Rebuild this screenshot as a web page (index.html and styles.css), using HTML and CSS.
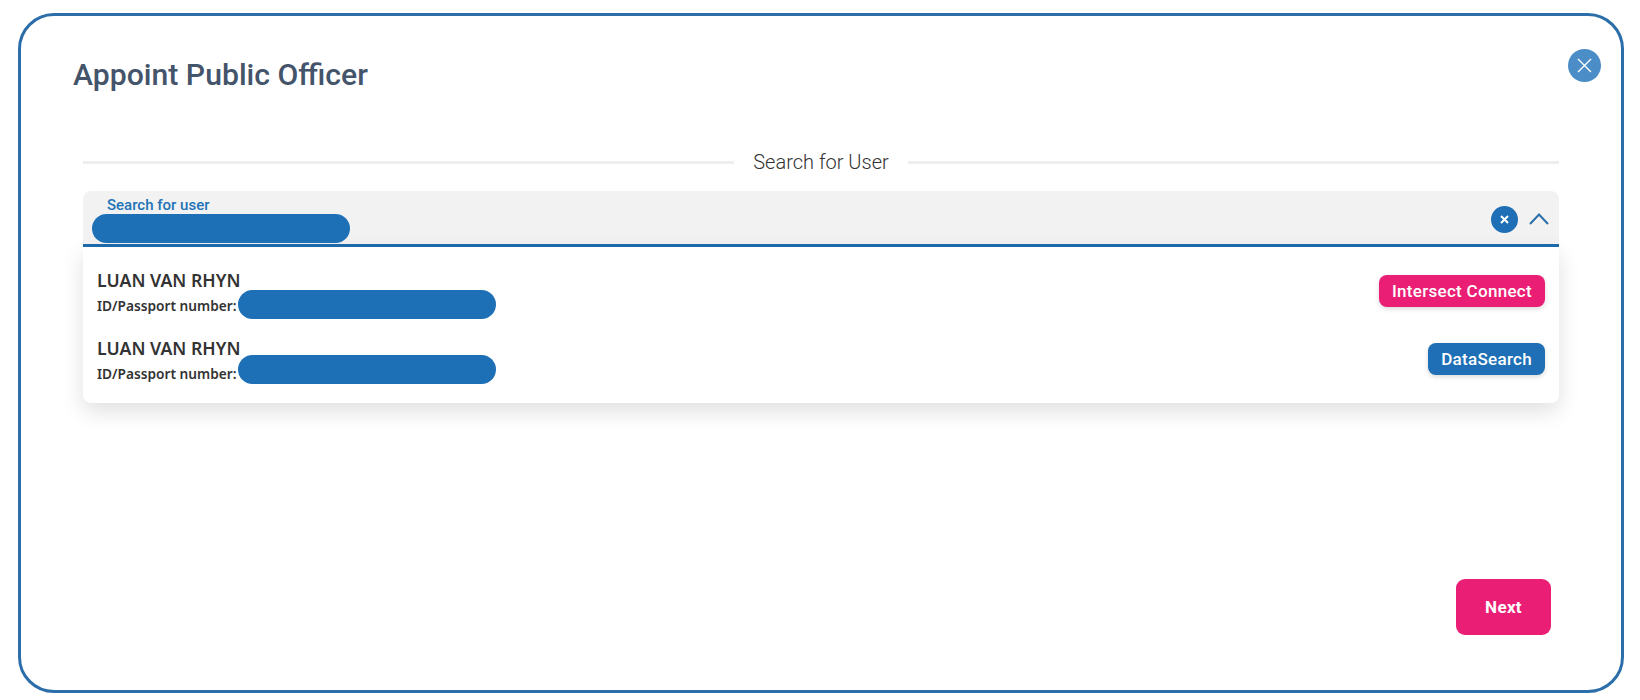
FILE: index.html
```html
<!DOCTYPE html>
<html lang="en">
  <head>
    <meta charset="UTF-8" />
    <meta name="viewport" content="width=device-width, initial-scale=1.0" />
    <title>Appoint Public Officer</title>
    <link rel="stylesheet" href="styles.css">
  </head>

  <body>
    <div class="modal">
      <button type="button" class="btn-close" aria-label="Close">
        <svg width="15" height="15" viewBox="0 0 15 15"><path d="M1 1l13 13M14 1L1 14" /></svg>
      </button>

      <h1 class="modal-title">Appoint Public Officer</h1>

      <div class="section">
        <div class="section-head"><span>Search for User</span></div>

        <div class="search-box">
          <div class="search-value">
            <label class="search-label">Search for user</label>
            <span class="mask mask-input"></span>
          </div>
          <button type="button" class="btn-clear" aria-label="Clear">
            <svg width="9" height="9" viewBox="0 0 9 9"><path d="M1 1l7 7M8 1L1 8" /></svg>
          </button>
          <button type="button" class="btn-arrow" aria-label="Collapse">
            <svg width="20" height="12" viewBox="0 0 20 12"><path d="M1 11l9-9.500 9 9.500" /></svg>
          </button>
        </div>

        <ul class="list">
          <li class="row">
            <div>
              <div class="name">LUAN VAN RHYN</div>
              <div class="id-line">ID/Passport number:<span class="mask mask-id"></span></div>
            </div>
            <button type="button" class="tag tag-pink">Intersect Connect</button>
          </li>
          <li class="row">
            <div>
              <div class="name">LUAN VAN RHYN</div>
              <div class="id-line">ID/Passport number:<span class="mask mask-id mask-up"></span></div>
            </div>
            <button type="button" class="tag tag-blue">DataSearch</button>
          </li>
        </ul>
      </div>

      <div class="modal-foot">
        <button type="button" class="btn-next">Next</button>
      </div>
    </div>
  </body>
</html>
```

FILE: styles.css
```css
html,
body {
  margin: 0;
  padding: 0;
  background: #fff;
}

body {
  font-family: Roboto, "Liberation Sans", sans-serif;
  padding: 13px 16px 7px 18px;
}

ul,
li {
  list-style: none;
  margin: 0;
  padding: 0;
}

button {
  cursor: pointer;
  border: none;
  padding: 0;
  font-family: inherit;
}

/* modal */
.modal {
  position: relative;
  box-sizing: border-box;
  height: 680px;
  border: 3px solid #2b6ea9;
  border-radius: 36px;
  background: #fff;
  display: flex;
  flex-direction: column;
}

.btn-close {
  position: absolute;
  top: 33px;
  right: 20px;
  width: 33px;
  height: 33px;
  border-radius: 50%;
  background: #4a8dc7;
  display: flex;
  align-items: center;
  justify-content: center;
}

.btn-close path {
  stroke: #fff;
  stroke-width: 1.4;
  fill: none;
}

.modal-title {
  margin: 42px 0 0 52px;
  font-size: 30.200px;
  line-height: 34px;
  font-weight: 500;
  color: #44546a;
}

.section {
  margin: 56px 62px 0 62px;
}

.section-head {
  display: flex;
  align-items: center;
  gap: 19px;
  height: 28px;
  font-size: 20px;
  font-weight: 300;
  color: #333;
}

.section-head::before,
.section-head::after {
  content: "";
  flex: 1;
  height: 3px;
  background: #eceef0;
}

/* search */
.search-box {
  box-sizing: border-box;
  height: 56px;
  margin-top: 15px;
  background: #f2f2f3;
  border-bottom: 3px solid #1e6cad;
  border-radius: 8px 8px 0 0;
  display: flex;
  align-items: center;
  padding-right: 10px;
}

.search-value {
  flex: 1;
  padding: 5px 0 0 9px;
}

.search-label {
  display: block;
  margin-left: 15px;
  font-size: 15px;
  line-height: 17px;
  font-weight: 500;
  color: #2272b6;
}

.mask {
  display: block;
  background: #1e70b6;
  border-radius: 14.500px;
  height: 29px;
}

.mask-input {
  width: 258px;
}

.btn-clear {
  width: 27px;
  height: 27px;
  margin-top: 4px;
  border-radius: 50%;
  background: #1e6fb5;
  display: flex;
  align-items: center;
  justify-content: center;
}

.btn-clear path {
  stroke: #fff;
  stroke-width: 2;
  fill: none;
}

.btn-arrow {
  width: 20px;
  height: 12px;
  margin: 3px 0 0 11px;
  background: none;
  display: block;
  line-height: 0;
}

.btn-arrow path {
  stroke: #2b6ea9;
  stroke-width: 2;
  fill: none;
}

/* list */
.list {
  box-sizing: border-box;
  height: 156px;
  padding: 22px 14px 0;
  border-radius: 0 0 8px 8px;
  background: #fff;
  box-shadow: 0 8px 22px rgba(0, 0, 0, 0.13);
}

.row {
  display: flex;
  justify-content: space-between;
  height: 68px;
  color: #333;
}

.name {
  font-family: "Noto Sans", sans-serif;
  font-size: 17.700px;
  line-height: 22px;
  font-weight: 600;
}

.id-line {
  display: flex;
  align-items: center;
  gap: 2px;
  height: 16px;
  margin-top: 6px;
  font-family: "Noto Sans", sans-serif;
  font-size: 13.700px;
  font-weight: 600;
  white-space: pre;
}

.mask-id {
  width: 258px;
  margin: -8px 0 -6px;
}

.mask-up {
  margin: -11px 0 -3px;
}

.tag {
  align-self: flex-start;
  height: 31.500px;
  padding: 0 13px;
  margin-top: 6px;
  border-radius: 8px;
  font-size: 17px;
  letter-spacing: 0.3px;
  font-weight: 500;
  color: #fff;
  box-shadow: 0 2px 5px rgba(0, 0, 0, 0.15);
}

.tag-pink {
  background: #e91e74;
}

.tag-blue {
  background: #1e6fb5;
}

/* footer */
.modal-foot {
  margin-top: auto;
  padding: 0 70px 55px 0;
  display: flex;
  justify-content: flex-end;
}

.btn-next {
  width: 95px;
  height: 56px;
  border-radius: 9px;
  background: #e91e74;
  color: #fff;
  font-size: 17px;
  letter-spacing: 0.3px;
  font-weight: 700;
}
```
